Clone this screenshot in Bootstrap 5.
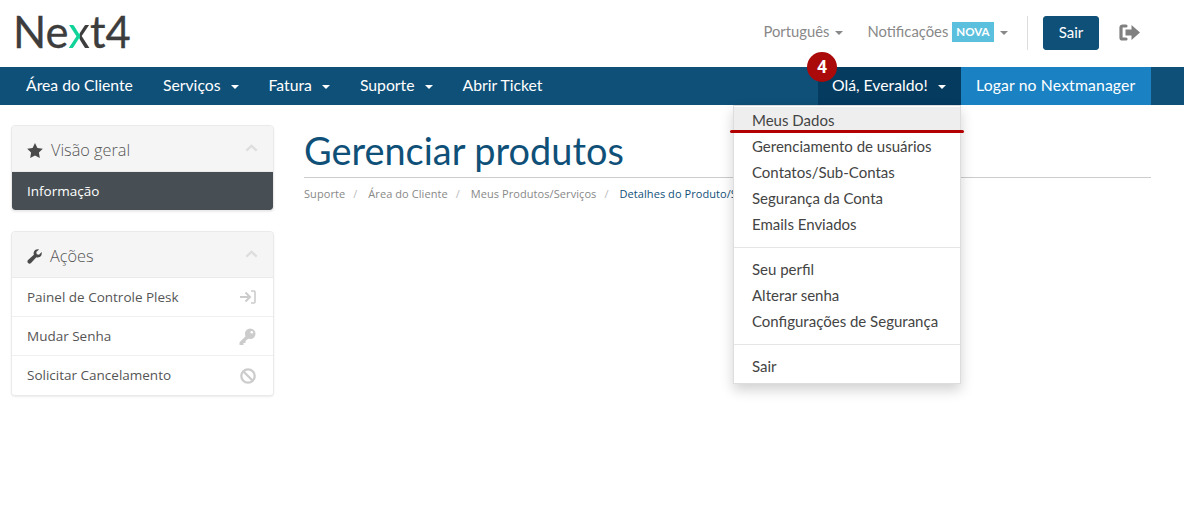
<!DOCTYPE html>
<html lang="pt">
<head>
<meta charset="utf-8">
<title>Gerenciar produtos</title>
<link rel="stylesheet" href="https://cdn.jsdelivr.net/npm/bootstrap@5.3.0/dist/css/bootstrap.min.css">
<style>
html,body{height:100%}
body{font-family:"Lato","Liberation Sans",sans-serif;background:#fff;overflow:hidden}
.top-head{height:67px;padding:0 44px 2px 13px}
.brand-mark{font-family:"Lato",sans-serif;font-size:43.5px;line-height:1;color:#3d3d3d;text-decoration:none;margin-top:-2px;-webkit-text-stroke:.3px #3d3d3d}
.brand-x{background:linear-gradient(90deg,#10d39a 55%,#3d3d3d 55%);-webkit-background-clip:text;background-clip:text;color:transparent;-webkit-text-stroke:0}
.head-link{color:#888;font-size:14.8px;text-decoration:none;margin-bottom:2px}
.head-link.dropdown-toggle::after{border-top-width:4px;border-left-width:4px;border-right-width:4px;margin-left:6px;vertical-align:2px}
.bar-link.dropdown-toggle::after{border-top-width:4px;border-left-width:4px;border-right-width:4px;margin-left:10px;vertical-align:2px}
.nova-tag{background:#5bc0de;color:#fff;font-weight:700;font-size:11.5px;padding:0 4.5px;line-height:20px;display:inline-block;vertical-align:1px;margin-left:3.5px}
.head-sep{width:1px;height:34px;background:#ddd;margin:0 15px 0 19px}
.exit-btn{--bs-btn-bg:#0f5078;--bs-btn-border-color:#0f5078;--bs-btn-color:#fff;--bs-btn-hover-bg:#0f5078;--bs-btn-hover-color:#fff;font-size:15px;width:56px;height:34px;padding:0;border-radius:3px}
.main-bar{background:#0f5078;height:38px;padding:0 33px 0 11px}
.bar-link{color:#fff;font-size:15.75px;line-height:36px;padding:0 15px;display:block;text-decoration:none;white-space:nowrap}
.bar-link:hover,.bar-link:focus{color:#fff}
.user-link{background:#053b5f;width:143px;height:38px;padding:0 14px}
.manager-link{background:#1a82c3;width:190px;padding:0 15px;letter-spacing:.14px}
.count-dot{position:absolute;left:-11px;top:-15px;width:30px;height:30px;border-radius:50%;background:#ab0a0a;color:#fff;font:700 17px/30px "Open Sans",sans-serif;text-align:center;z-index:5}
.user-menu{position:absolute;top:100%;right:190px;width:228px;height:279px;margin:0;padding:1px 0 0;border:1px solid #ddd;border-radius:0;box-shadow:0 6px 12px rgba(0,0,0,.18);display:block;--bs-dropdown-min-width:0;z-index:4}
.user-menu .dropdown-item{font-size:15px;line-height:26px;padding:0 18px;color:#444}
.user-menu .dropdown-item.is-on{background:#eee}
.user-menu .dropdown-divider{margin:10px 0 8px;border-color:#e5e5e5;opacity:1}
.red-mark{position:absolute;left:-4px;top:23px;width:234px;height:3px;border-radius:2px;background:#b30000;z-index:6}
.page-body{padding:20px 33px 0 11px;gap:30px}
.side-col{width:263px;flex:none}
.side-card{--bs-card-border-color:#eaeaea;--bs-card-border-radius:4px;--bs-card-inner-border-radius:3px;box-shadow:0 1px 2px rgba(0,0,0,.08);margin-bottom:20px;font-family:"Open Sans",sans-serif}
.side-head{background:#f5f5f5;height:45px;padding:4px 15px 0;font-size:16.3px;font-weight:300;color:#555;border:0;display:flex;align-items:center}
.side-head svg.lead-ico{margin-right:8px}
.side-head svg.fold-ico{margin-left:auto;margin-bottom:6px}
.side-card .list-group-item{font-size:13.5px;height:39px;padding:0 17px 0 15px;color:#555;display:flex;align-items:center;justify-content:space-between;border-color:#f0f0f0}
.side-card .list-group-item.is-cur{background:#474f54;color:#fff;height:38px;font-weight:500;border:0}
.main-col{flex:1;min-width:0;overflow:hidden}
.page-title{font-family:"Lato",sans-serif;font-size:37.9px;line-height:51px;font-weight:400;color:#0f5078;margin:0;border-bottom:1px solid #ccc;height:53px}
.crumbs{--bs-breadcrumb-font-size:11px;--bs-breadcrumb-margin-bottom:0;--bs-breadcrumb-divider-color:#bbb;font-family:"Open Sans",sans-serif;margin-top:8px;flex-wrap:nowrap;white-space:nowrap;letter-spacing:.07px}
.crumbs a{color:#888;text-decoration:none}
.crumbs .active{color:#0f5078}
.crumbs .breadcrumb-item+.breadcrumb-item{padding-left:8px}
.crumbs .breadcrumb-item+.breadcrumb-item::before{padding-right:11px;color:#bbb}
</style>
</head>
<body>
<header class="top-head d-flex align-items-center justify-content-between">
  <a class="brand-mark" href="#">Ne<span class="brand-x">x</span>t4</a>
  <div class="d-flex align-items-center">
    <a class="head-link dropdown-toggle" href="#">Português</a>
    <a class="head-link dropdown-toggle ms-4" href="#">Notificações<span class="nova-tag">NOVA</span></a>
    <span class="head-sep"></span>
    <a class="btn exit-btn d-flex align-items-center justify-content-center" href="#">Sair</a>
    <svg class="ms-3 ps-1" width="25" height="17" viewBox="0 0 21 17" aria-hidden="true"><path d="M7 2H3.600A1.600 1.600 0 0 0 2 3.600v9.800A1.600 1.600 0 0 0 3.600 15H7" fill="none" stroke="#808080" stroke-width="3.200" stroke-linecap="round"/><path d="M6.500 5.500h6V1L21 8.500 12.500 16v-4.500h-6z" fill="#808080"/></svg>
  </div>
</header>
<nav class="main-bar d-flex justify-content-between">
  <div class="d-flex">
    <a class="bar-link" href="#">Área do Cliente</a>
    <a class="bar-link dropdown-toggle" href="#">Serviços</a>
    <a class="bar-link dropdown-toggle" href="#">Fatura</a>
    <a class="bar-link dropdown-toggle" href="#">Suporte</a>
    <a class="bar-link" href="#">Abrir Ticket</a>
  </div>
  <div class="d-flex position-relative">
    <div class="position-relative">
      <span class="count-dot">4</span>
      <a class="bar-link user-link dropdown-toggle" href="#">Olá, Everaldo!</a>
    </div>
    <a class="bar-link manager-link" href="#">Logar no Nextmanager</a>
    <ul class="dropdown-menu user-menu">
      <li class="position-relative"><span class="red-mark"></span><a class="dropdown-item is-on" href="#">Meus Dados</a></li>
      <li><a class="dropdown-item" href="#">Gerenciamento de usuários</a></li>
      <li><a class="dropdown-item" href="#">Contatos/Sub-Contas</a></li>
      <li><a class="dropdown-item" href="#">Segurança da Conta</a></li>
      <li><a class="dropdown-item" href="#">Emails Enviados</a></li>
      <li><hr class="dropdown-divider"></li>
      <li><a class="dropdown-item" href="#">Seu perfil</a></li>
      <li><a class="dropdown-item" href="#">Alterar senha</a></li>
      <li><a class="dropdown-item" href="#">Configurações de Segurança</a></li>
      <li><hr class="dropdown-divider"></li>
      <li><a class="dropdown-item" href="#">Sair</a></li>
    </ul>
  </div>
</nav>
<div class="page-body d-flex">
  <aside class="side-col">
    <div class="card side-card overflow-hidden">
      <div class="side-head">
        <svg class="lead-ico" width="16" height="15" viewBox="0 0 24 23" aria-hidden="true"><path d="M12 0l3.700 7.600 8.300 1.200-6 5.900 1.400 8.300L12 19l-7.400 4 1.400-8.300-6-5.900 8.300-1.200z" fill="#4a4a4a"/></svg>
        <span>Visão geral</span>
        <svg class="fold-ico" width="13" height="8" viewBox="0 0 15 9" aria-hidden="true"><path d="M1.500 7.500l6-5.500 6 5.500" fill="none" stroke="#dedede" stroke-width="2.800"/></svg>
      </div>
      <div class="list-group list-group-flush">
        <a class="list-group-item is-cur" href="#">Informação</a>
      </div>
    </div>
    <div class="card side-card overflow-hidden">
      <div class="side-head">
        <svg class="lead-ico" width="15" height="15" viewBox="0 0 16 16" aria-hidden="true"><path d="M15.600 3.300c.500 2.300-.300 4.300-2.100 5.200-1.200.600-2.500.600-3.500.200L4.300 15c-.900.900-2.300.900-3.200 0s-.9-2.300 0-3.200L7.300 6C6.900 4.900 7 3.600 7.600 2.500 8.500.8 10.500-.1 12.800.4L9.900 3.300l.5 2.400 2.400.5z" fill="#4a4a4a"/></svg>
        <span>Ações</span>
        <svg class="fold-ico" width="13" height="8" viewBox="0 0 15 9" aria-hidden="true"><path d="M1.500 7.500l6-5.500 6 5.500" fill="none" stroke="#dedede" stroke-width="2.800"/></svg>
      </div>
      <div class="list-group list-group-flush">
        <a class="list-group-item" href="#">Painel de Controle Plesk
          <svg width="17" height="14" viewBox="0 0 17 14" aria-hidden="true"><path d="M1 7h9M6.500 2.500L11 7l-4.500 4.500" fill="none" stroke="#ccc" stroke-width="2"/><path d="M12 1h3a1 1 0 0 1 1 1v10a1 1 0 0 1-1 1h-3" fill="none" stroke="#ccc" stroke-width="1.600"/></svg>
        </a>
        <a class="list-group-item" href="#">Mudar Senha
          <svg width="17" height="17" viewBox="0 0 17 17" aria-hidden="true"><circle cx="11.200" cy="5.800" r="5.300" fill="#ccc"/><circle cx="12.800" cy="4.200" r="1.300" fill="#fff"/><path d="M8 7L.5 14.200V17h4v-2h2v-2l3.500-3z" fill="#ccc"/></svg>
        </a>
        <a class="list-group-item" href="#">Solicitar Cancelamento
          <svg width="16" height="16" viewBox="0 0 16 16" aria-hidden="true"><circle cx="8" cy="8" r="6.700" fill="none" stroke="#ccc" stroke-width="2.300"/><path d="M3.300 3.300l9.400 9.400" stroke="#ccc" stroke-width="2.300"/></svg>
        </a>
      </div>
    </div>
  </aside>
  <main class="main-col">
    <h1 class="page-title">Gerenciar produtos</h1>
    <ol class="breadcrumb crumbs">
      <li class="breadcrumb-item"><a href="#">Suporte</a></li>
      <li class="breadcrumb-item"><a href="#">Área do Cliente</a></li>
      <li class="breadcrumb-item"><a href="#">Meus Produtos/Serviços</a></li>
      <li class="breadcrumb-item active">Detalhes do Produto/Serviço</li>
    </ol>
  </main>
</div>
<script src="https://cdn.jsdelivr.net/npm/bootstrap@5.3.0/dist/js/bootstrap.bundle.min.js"></script>
</body>
</html>
